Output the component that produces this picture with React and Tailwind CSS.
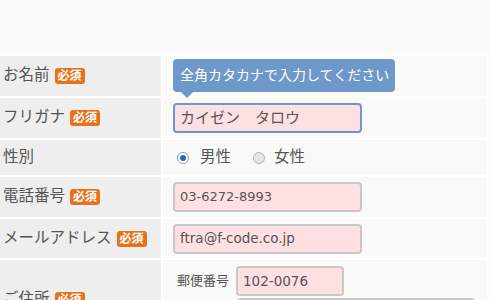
export default function App() {
  const label = 'flex items-center bg-[#eeeeee] pl-[3px] text-[15.5px] text-[#555555]'
  const cell = 'relative flex items-center bg-[#f9f9f7] pl-[10px]'
  const input =
    'h-[30px] rounded-[4px] border-2 bg-[#ffe0e2] px-[5px] text-[13.5px] text-[#555555] outline-none'

  const Badge = () => (
    <span className="ml-[5px] inline-flex h-[16px] items-center rounded-[3px] bg-[#e8721c] px-[3px] text-[12px] font-bold leading-none text-white">
      必須
    </span>
  )

  return (
    <div
      className="h-[300px] w-[490px] overflow-hidden bg-[#f9f9f7]"
      style={{ fontFamily: '"DejaVu Sans", "Noto Sans CJK JP", sans-serif' }}
    >
      <div className="mt-[54px] w-[489px] bg-white pr-[2px] pt-[2px]">
        <div className="grid grid-cols-[161px_324px] gap-[2px]">
          {/* お名前 */}
          <div className={`${label} h-[40px]`}>
            お名前<Badge />
          </div>
          <div className={`${cell} h-[40px]`}>
            <div className="absolute left-[10px] top-[3px] z-10">
              <div className="flex h-[33px] items-center whitespace-nowrap rounded-[4px] bg-[#6f98ca] pl-[7px] pr-[6px] text-[14px] text-white">
                全角カタカナで入力してください
              </div>
              <div className="ml-[8px] h-0 w-0 border-x-[6px] border-t-[6px] border-x-transparent border-t-[#6f98ca]" />
            </div>
          </div>

          {/* フリガナ */}
          <div className={`${label} h-[40px]`}>
            フリガナ<Badge />
          </div>
          <div className={`${cell} h-[40px]`}>
            <div className={`${input} flex w-[189px] items-center border-[#7098c9] text-[15px]`}>
              カイゼン　タロウ
            </div>
          </div>

          {/* 性別 */}
          <div className={`${label} h-[35px]`}>性別</div>
          <div className={`${cell} h-[35px] text-[15.5px] text-[#555555]`}>
            <span className="ml-[4px] flex h-[12px] w-[12px] items-center justify-center rounded-full border border-[#9a9a9a] bg-white">
              <span className="h-[6px] w-[6px] rounded-full bg-[#1f6fb2]" />
            </span>
            <span className="ml-[11px]">男性</span>
            <span className="ml-[22px] h-[12px] w-[12px] rounded-full border border-[#b5b5b5] bg-[#e6e6e6]" />
            <span className="ml-[9px]">女性</span>
          </div>

          {/* 電話番号 */}
          <div className={`${label} h-[40px]`}>
            電話番号<Badge />
          </div>
          <div className={`${cell} h-[40px]`}>
            <div className={`${input} flex w-[189px] items-center border-[#c8c8c8] text-[13px]`}>03-6272-8993</div>
          </div>

          {/* メールアドレス */}
          <div className={`${label} h-[39px]`}>
            メールアドレス<Badge />
          </div>
          <div className={`${cell} h-[39px]`}>
            <div className={`${input} flex w-[189px] items-center border-[#c8c8c8]`}>ftra@f-code.co.jp</div>
          </div>

          {/* ご住所 */}
          <div className={`${label} h-[80px]`}>
            ご住所<Badge />
          </div>
          <div className="flex h-[80px] flex-col bg-[#f9f9f7] pl-[14px] pt-[6px]">
            <div className="flex items-center">
              <span className="text-[13px] text-[#555555]">郵便番号</span>
              <div className={`${input} ml-[7px] flex w-[108px] items-center border-[#c8c8c8]`}>102-0076</div>
            </div>
            <div className={`${input} ml-[60px] mt-[2px] w-[238px] border-[#c8c8c8]`} />
          </div>
        </div>
      </div>
    </div>
  )
}
